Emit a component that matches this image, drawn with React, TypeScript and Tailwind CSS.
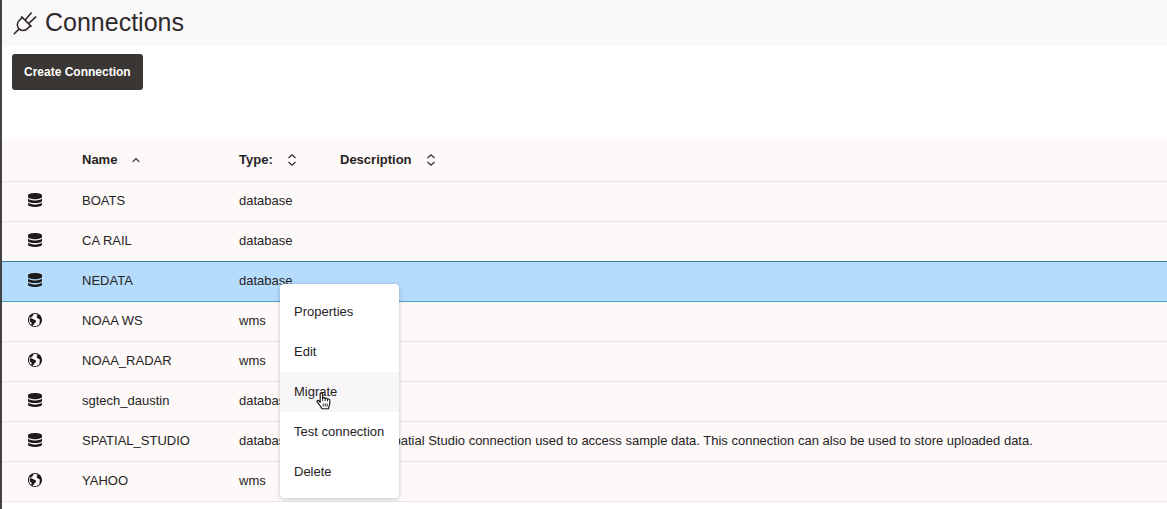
import { ImDatabase, ImEarth } from "react-icons/im";
import clsx from "clsx";

type Connection = {
  name: string;
  type: "database" | "wms";
  description?: string;
};

const CONNECTIONS: Connection[] = [
  { name: "BOATS", type: "database" },
  { name: "CA RAIL", type: "database" },
  { name: "NEDATA", type: "database" },
  { name: "NOAA WS", type: "wms" },
  { name: "NOAA_RADAR", type: "wms" },
  { name: "sgtech_daustin", type: "database" },
  {
    name: "SPATIAL_STUDIO",
    type: "database",
    description:
      "Default Spatial Studio connection used to access sample data. This connection can also be used to store uploaded data.",
  },
  { name: "YAHOO", type: "wms" },
];

const MENU_ITEMS = ["Properties", "Edit", "Migrate", "Test connection", "Delete"];

const SELECTED = "NEDATA";
const HOVERED = "Migrate";

function PlugIcon() {
  return (
    <svg width="24" height="24" viewBox="0 0 24 24" fill="none" stroke="#2f2b2c" strokeWidth="1.6" aria-hidden="true">
      <path d="M0.8 23.2L6.4 17.6" />
      <path d="M8.2 5.4L18.6 15.8" />
      <path d="M9.3 6.5L6 9.8C3.8 12 3.8 15.6 6 17.9C8.3 20.1 11.9 20.1 14.1 17.9L17.5 14.6" />
      <path d="M12 9.2L18.6 1.4M15.4 12.6L23.2 5.6" />
    </svg>
  );
}

function SortIcon({ both }: { both?: boolean }) {
  return (
    <svg width="10" height="12" viewBox="0 0 10 12" fill="none" stroke="#2f2b2c" strokeWidth="1.2" aria-hidden="true">
      {both ? <path d="M1.5 4L5 0.8L8.5 4M1.5 8L5 11.2L8.5 8" /> : <path d="M1.8 7.8L5 4.6L8.2 7.8" />}
    </svg>
  );
}

function HandCursor() {
  return (
    <svg
      className="pointer-events-none absolute left-9 top-5"
      width="16"
      height="18"
      viewBox="0 0 16 18"
      fill="white"
      stroke="#111"
      strokeWidth="1.1"
      strokeLinejoin="round"
      aria-hidden="true"
    >
      <path d="M4.2 10.4V2.2C4.2 0.4 6.6 0.4 6.6 2.2V6.4C6.8 5.2 9 5.3 9.1 6.8C9.5 5.8 11.4 6 11.5 7.4C12 6.7 13.8 6.9 13.8 8.5V11.5C13.8 13.2 12.7 14 12.5 16.8H5.8C5.5 14.5 3.4 13 1.3 10.2C0.3 8.6 2.2 7.8 3.2 9.1Z" />
      <path d="M6.6 6.4V9M9.1 6.8V9.2M11.5 7.4V9.4M7.2 11.5V14.5M9.2 11.5V14.5M11.2 11.5V14.5" strokeWidth="0.9" />
    </svg>
  );
}

function ContextMenu() {
  return (
    <div
      role="menu"
      className="absolute left-[278px] top-[284px] z-10 min-w-[119px] rounded-sm bg-white pt-2 pb-1.5 shadow-[0_1px_4px_rgba(0,0,0,0.22)]"
    >
      {MENU_ITEMS.map((item) => (
        <div key={item} className="relative">
          <button
            type="button"
            role="menuitem"
            className={clsx(
              "block h-10 w-full px-3.5 text-left whitespace-nowrap",
              item === HOVERED && "bg-[#f7f6f8]"
            )}
          >
            {item}
          </button>
          {item === HOVERED && <HandCursor />}
        </div>
      ))}
    </div>
  );
}

function ConnectionTable() {
  return (
    <table className="w-full table-fixed border-collapse bg-[#fcf9f8] text-left">
      <colgroup>
        <col className="w-[66px]" />
        <col className="w-[157px]" />
        <col className="w-[101px]" />
        <col />
      </colgroup>
      <thead>
        <tr className="h-[42px] border-b border-[#e9e6e5]">
          <th aria-label="Kind" />
          <th className="pl-3.5">
            <button type="button" className="flex items-center gap-3.5 font-bold">
              Name <SortIcon />
            </button>
          </th>
          <th className="pl-3.5">
            <button type="button" className="flex items-center gap-3.5 font-bold">
              Type: <SortIcon both />
            </button>
          </th>
          <th className="pl-3.5">
            <button type="button" className="flex items-center gap-3.5 font-bold">
              Description <SortIcon both />
            </button>
          </th>
        </tr>
      </thead>
      <tbody>
        {CONNECTIONS.map((c, i) => {
          const isSelected = c.name === SELECTED;
          const beforeSelected = CONNECTIONS[i + 1]?.name === SELECTED;
          const Icon = c.type === "database" ? ImDatabase : ImEarth;

          return (
            <tr
              key={c.name}
              className={clsx(
                "h-10 border-b",
                isSelected && "border-[#4b9fc4] bg-[#b5dbfd]",
                beforeSelected && "border-[#387f9c]",
                !isSelected && !beforeSelected && "border-[#e9e6e5]"
              )}
            >
              <td className="pb-0.5">
                <Icon className="mx-auto size-3.5 text-[#1d1a1b]" />
              </td>
              <td className="pl-3.5">{c.name}</td>
              <td className="pl-3.5">{c.type}</td>
              <td className="pl-3.5 whitespace-nowrap">{c.description}</td>
            </tr>
          );
        })}
      </tbody>
    </table>
  );
}

export default function App() {
  return (
    <div className="relative min-h-screen overflow-hidden border-l-2 border-[#454243] bg-white font-['Liberation_Sans',Arial,sans-serif] text-[13px] text-[#262324]">
      <header className="flex h-[46px] items-center gap-2 bg-[#faf8f9] pl-[11px]">
        <PlugIcon />
        <h1 className="text-[25px] text-[#2f2b2c]">Connections</h1>
      </header>
      <div className="px-2.5 pt-2 pb-[49px]">
        <button type="button" className="block h-9 rounded-[3px] bg-[#3a3634] px-3 text-[12px] font-bold text-white">
          Create Connection
        </button>
      </div>
      <ConnectionTable />
      <ContextMenu />
    </div>
  );
}
